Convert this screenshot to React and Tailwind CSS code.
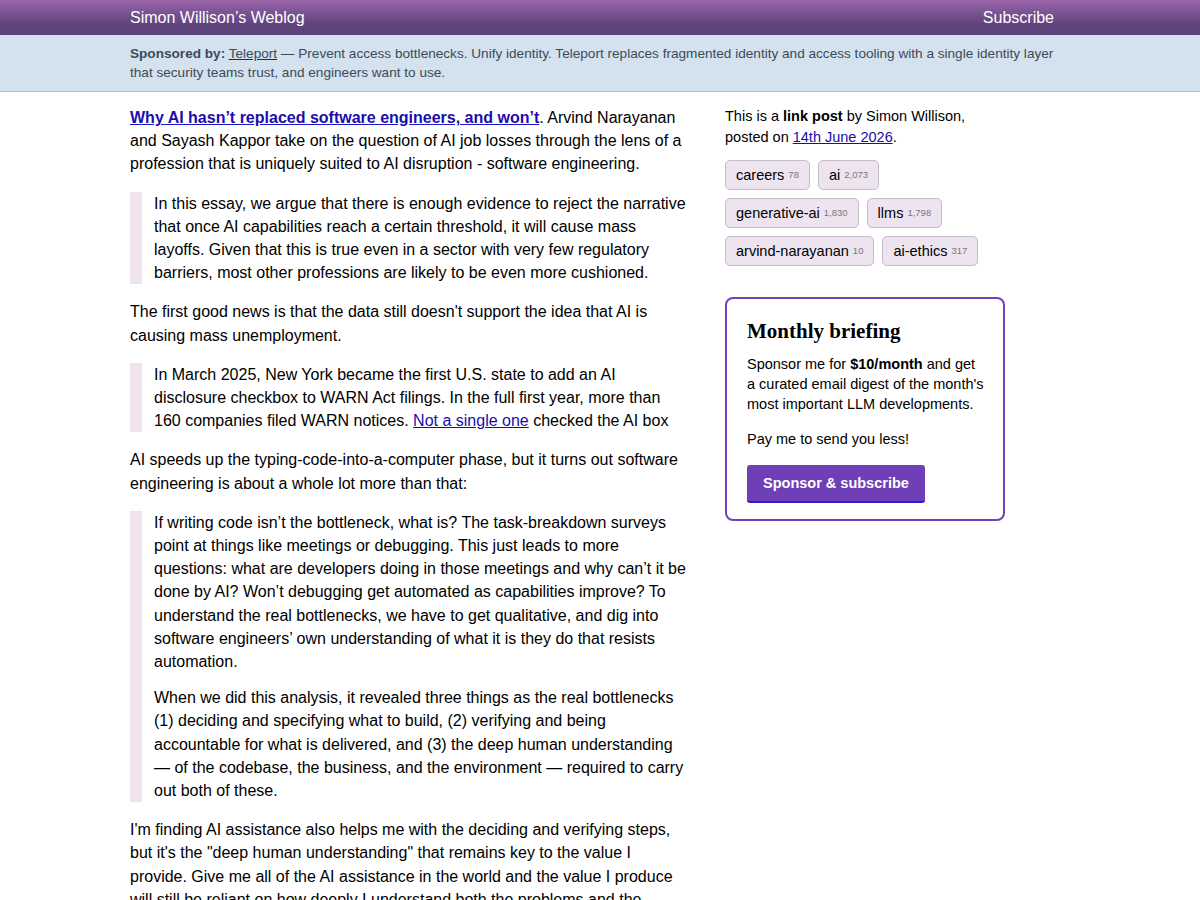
import React from "react";

const tags = [
  ["careers", "78"],
  ["ai", "2,073"],
  ["generative-ai", "1,830"],
  ["llms", "1,798"],
  ["arvind-narayanan", "10"],
  ["ai-ethics", "317"],
];

const Quote = ({ children }) => (
  <blockquote className="my-4 border-l-[12px] border-[#efe4f0] pl-3">{children}</blockquote>
);

const App = () => {
  return (
    <div className="min-h-[900px] bg-white text-black font-['Liberation_Sans',Arial,sans-serif]">
      <header className="h-[35px] bg-[linear-gradient(to_bottom,#9c66ab_0%,#7a5493_35%,#5f437c_70%,#5c417a_100%)]">
        <div className="ml-[130px] flex h-full w-[924px] items-center justify-between text-[16px] text-white">
          <span>Simon Willison’s Weblog</span>
          <span>Subscribe</span>
        </div>
      </header>

      <div className="border-b border-[#aac3da] bg-[#d3e2ee]">
        <p className="ml-[130px] w-[926px] pt-[9px] pb-[9px] text-[13.6px] leading-[19px] text-[#3d4a58]">
          <strong>Sponsored by:</strong>{" "}
          <span className="underline decoration-[#1a1aa6]">Teleport</span> — Prevent access bottlenecks. Unify
          identity. Teleport replaces fragmented identity and access tooling with a single identity layer that security
          teams trust, and engineers want to use.
        </p>
      </div>

      <div className="ml-[130px] flex w-[924px] gap-[35px] pt-[14px]">
        <main className="w-[560px] text-[16px] leading-[23.2px]">
          <p className="mb-4">
            <a className="font-bold text-[#1a0dab] underline decoration-[#1a1acc]">
              Why AI hasn’t replaced software engineers, and won’t
            </a>
            . Arvind Narayanan and Sayash Kappor take on the question of AI job losses through the lens of a profession
            that is uniquely suited to AI disruption - software engineering.
          </p>
          <Quote>
            <p>
              In this essay, we argue that there is enough evidence to reject the narrative that once AI capabilities
              reach a certain threshold, it will cause mass layoffs. Given that this is true even in a sector with very
              few regulatory barriers, most other professions are likely to be even more cushioned.
            </p>
          </Quote>
          <p className="mb-4">
            The first good news is that the data still doesn't support the idea that AI is causing mass unemployment.
          </p>
          <Quote>
            <p>
              In March 2025, New York became the first U.S. state to add an AI disclosure checkbox to WARN Act
              filings. In the full first year, more than 160 companies filed WARN notices.{" "}
              <a className="text-[#1a0dab] underline">Not a single one</a> checked the AI box
            </p>
          </Quote>
          <p className="mb-4">
            AI speeds up the typing-code-into-a-computer phase, but it turns out software engineering is about a whole
            lot more than that:
          </p>
          <Quote>
            <p>
              If writing code isn’t the bottleneck, what is? The task-breakdown surveys point at things like meetings
              or debugging. This just leads to more questions: what are developers doing in those meetings and why
              can’t it be done by AI? Won’t debugging get automated as capabilities improve? To understand the real
              bottlenecks, we have to get qualitative, and dig into software engineers’ own understanding of what it is
              they do that resists automation.
            </p>
            <p className="mt-[13px]">
              When we did this analysis, it revealed three things as the real bottlenecks (1) deciding and specifying
              what to build, (2) verifying and being accountable for what is delivered, and (3) the deep human
              understanding — of the codebase, the business, and the environment — required to carry out both of
              these.
            </p>
          </Quote>
          <p className="mb-4">
            I'm finding AI assistance also helps me with the deciding and verifying steps, but it's the "deep human
            understanding" that remains key to the value I provide. Give me all of the AI assistance in the world and
            the value I produce will still be reliant on how deeply I understand both the problems and the
            opportunities.
          </p>
        </main>

        <aside className="w-[280px]">
          <p className="text-[14.5px] leading-[21px]">
            This is a <strong>link post</strong> by Simon Willison, posted on{" "}
            <a className="text-[#1a0dab] underline">14th June 2026</a>.
          </p>
          <div className="mt-[12px] flex flex-wrap gap-x-[8px] gap-y-[8px]">
            {tags.map(([name, count]) => (
              <span
                key={name}
                className="flex h-[30px] items-center rounded-[5px] border border-[#c4bdc8] bg-[#eee4f0] px-[10px] pt-px text-[14.5px]"
              >
                {name}
                <span className="ml-[4px] text-[9.5px] text-[#777]">{count}</span>
              </span>
            ))}
          </div>

          <div className="mt-[31px] rounded-[8px] border-2 border-[#7044b8] pt-[18px] pr-[17px] pb-[16px] pl-[20px]">
            <h3 className="font-['Liberation_Serif','Times_New_Roman',serif] text-[21px] leading-[28px] font-bold">
              Monthly briefing
            </h3>
            <p className="mt-[9px] text-[14.5px] leading-[20px]">
              Sponsor me for <strong>$10/month</strong> and get a curated email digest of the month's most important
              LLM developments.
            </p>
            <p className="mt-[15px] text-[14.5px] leading-[20px]">Pay me to send you less!</p>
            <button className="mt-[16px] h-[38px] rounded-[3px] border-b-2 border-[#2a1bd0] bg-[#6e3fb7] px-[16px] pt-px text-[14.5px] font-bold text-white">
              Sponsor &amp; subscribe
            </button>
          </div>
        </aside>
      </div>
    </div>
  );
};

export default App;
